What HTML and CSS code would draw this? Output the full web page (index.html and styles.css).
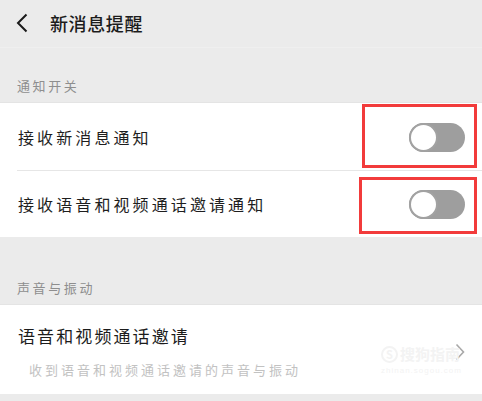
FILE: index.html
```html
<!DOCTYPE html>
<html lang="zh">
<head>
<meta charset="utf-8">
<link rel="stylesheet" href="styles.css">
</head>
<body>
<div class="page">
  <header class="topbar">
    <svg class="back" width="14" height="20" viewBox="0 0 14 20"><path d="M11.5 1.5 L3 10 L11.5 18.5" fill="none" stroke="#1a1a1a" stroke-width="2"/></svg>
    <span class="title">新消息提醒</span>
  </header>

  <div class="section-label first">通知开关</div>
  <div class="card">
    <div class="row row-a">
      <span class="row-text">接收新消息通知</span>
      <span class="toggle"><span class="knob"></span></span>
      <span class="mark mark-a"></span>
    </div>
    <div class="row row-b">
      <span class="row-text">接收语音和视频通话邀请通知</span>
      <span class="toggle"><span class="knob"></span></span>
      <span class="mark mark-b"></span>
    </div>
  </div>

  <div class="section-label second">声音与振动</div>
  <div class="card">
    <div class="link-row">
      <div class="link-text">
        <div class="link-title">语音和视频通话邀请</div>
        <div class="link-sub">收到语音和视频通话邀请的声音与振动</div>
      </div>
      <svg class="chev" width="10" height="18" viewBox="0 0 10 18"><path d="M1.5 1.5 L8.5 9 L1.5 16.5" fill="none" stroke="#a8a8a8" stroke-width="1.6"/></svg>
      <div class="watermark">
        <div class="wm-top"><span class="wm-logo">S</span>搜狗指南</div>
        <div class="wm-url">zhinan.sogou.com</div>
      </div>
    </div>
  </div>
</div>
</body>
</html>
```

FILE: styles.css
```css
* { box-sizing: border-box; }
html, body { margin: 0; padding: 0; }
body {
  background: #ebebeb;
  font-family: "Noto Sans CJK SC", "Noto Sans", sans-serif;
  width: 482px;
  height: 401px;
  overflow: hidden;
}
.page { width: 482px; }
.topbar {
  height: 48px;
  display: flex;
  align-items: center;
  padding-left: 15px;
  border-bottom: 1px solid #efefef;
}
.back { display: block; margin-top: -1px; }
.title {
  margin-left: 21px;
  font-size: 18px;
  font-weight: 500;
  letter-spacing: 0.6px;
  color: #1c1c1c;
  line-height: 20px;
  margin-top: -2px;
}
.section-label {
  display: flex;
  align-items: center;
  padding-left: 17px;
  font-size: 13px;
  letter-spacing: 2.6px;
  color: #8e8e8e;
  line-height: 33px;
}
.section-label.first { height: 54px; padding-top: 21px; }
.section-label.second { height: 67px; padding-top: 34px; }
.card {
  background: #fff;
  border-top: 1px solid #e4e4e4;
}
.row {
  position: relative;
  display: flex;
  align-items: center;
  justify-content: space-between;
  padding: 0 17px 0 18px;
}
.row-a { height: 68px; }
.row-a::after {
  content: "";
  position: absolute;
  left: 17px;
  right: 0;
  bottom: 0;
  height: 1px;
  background: #e6e6e6;
}
.row-b { height: 66px; }
.row-text {
  font-size: 16px;
  letter-spacing: 3.1px;
  color: #1e1e1e;
  line-height: 20px;
}
.toggle {
  position: relative;
  display: block;
  width: 56px;
  height: 29px;
  border-radius: 15px;
  background: #9e9e9e;
}
.knob {
  position: absolute;
  left: 0;
  top: 0;
  width: 29px;
  height: 29px;
  border-radius: 50%;
  background: #fff;
  border: 2px solid #a2a2a2;
}
.mark {
  position: absolute;
  border: 3px solid #f23b3b;
}
.mark-a { top: 1px; right: 5px; width: 115px; height: 64px; }
.mark-b { top: 6px; right: 5px; width: 118px; height: 57px; }
.link-row {
  position: relative;
  height: 89px;
  display: flex;
  align-items: center;
  justify-content: space-between;
  padding: 0 17px 0 18px;
}
.link-text { display: flex; flex-direction: column; margin-top: 4px; }
.link-title {
  font-size: 17px;
  letter-spacing: 2.1px;
  color: #1c1c1c;
  line-height: 22px;
}
.link-sub {
  margin-top: 15px;
  padding-left: 11px;
  font-size: 13px;
  letter-spacing: 3px;
  color: #c2c2c2;
  line-height: 16px;
}
.chev { display: block; margin-top: 5px; }
.watermark {
  position: absolute;
  left: 381px;
  top: 39px;
  color: #f3f3f3;
}
.wm-top {
  display: flex;
  align-items: center;
  font-size: 15px;
  line-height: 20px;
  font-weight: 700;
}
.wm-logo {
  display: inline-flex;
  align-items: center;
  justify-content: center;
  width: 17px;
  height: 17px;
  border-radius: 50%;
  border: 2px solid #f3f3f3;
  font-size: 11px;
  margin-right: 2px;
}
.wm-url {
  font-family: "Liberation Sans", sans-serif;
  font-size: 8px;
  letter-spacing: 1px;
  line-height: 10px;
  margin-top: 2px;
}
```
